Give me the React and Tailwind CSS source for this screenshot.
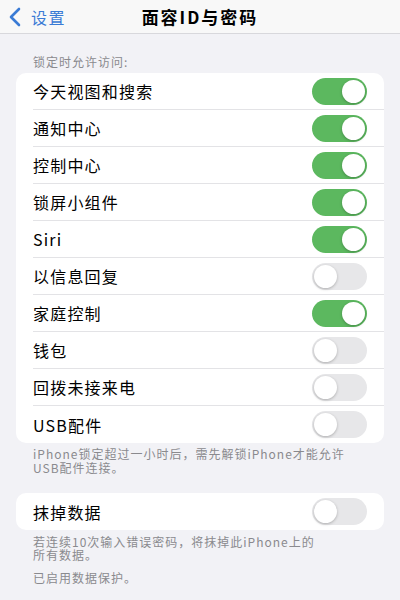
import React from "react";

const rows = [
  { label: "今天视图和搜索", on: true },
  { label: "通知中心", on: true },
  { label: "控制中心", on: true },
  { label: "锁屏小组件", on: true },
  { label: "Siri", on: true },
  { label: "以信息回复", on: false },
  { label: "家庭控制", on: true },
  { label: "钱包", on: false },
  { label: "回拨未接来电", on: false },
  { label: "USB配件", on: false },
];

function Toggle({ on }) {
  return (
    <div
      className={
        "w-[55px] h-[27px] rounded-full p-[2px] flex shrink-0 " +
        (on ? "bg-[#5cb85f] justify-end" : "bg-[#e7e7e9] justify-start")
      }
    >
      <div className="w-[23px] h-[23px] rounded-full bg-white shadow-[0_1px_3px_rgba(0,0,0,0.25)]" />
    </div>
  );
}

function Row({ label, on, last }) {
  return (
    <div className="pl-[17px] flex">
      <div
        className={
          "flex-1 h-[37px] flex items-center justify-between pr-[17px] " +
          (last ? "" : "border-b border-[#e3e3e6]")
        }
      >
        <span className="text-[16px] tracking-[1.2px] text-black leading-[20px]">{label}</span>
        <Toggle on={on} />
      </div>
    </div>
  );
}

export default function App() {
  return (
    <div
      className="w-[400px] h-[600px] bg-[#f2f2f6] overflow-hidden"
      style={{ fontFamily: '"Noto Sans CJK SC", "Noto Sans", sans-serif' }}
    >
      <div className="h-[34px] bg-[#f8f8f8] border-b border-[#d8d8dc] flex items-center relative">
        <div className="flex items-center pl-[8px] text-[#3a7bd5]">
          <svg width="14" height="20" viewBox="0 0 14 20">
            <path d="M11 2 L3 10 L11 18" fill="none" stroke="#3a7bd5" strokeWidth="2.6" strokeLinecap="round" strokeLinejoin="round" />
          </svg>
          <span className="ml-[9px] text-[16px] tracking-[1.5px] leading-[20px]">设置</span>
        </div>
        <div className="absolute inset-x-0 text-center text-[17px] tracking-[2px] font-semibold text-black leading-[20px] pointer-events-none">
          面容ID与密码
        </div>
      </div>

      <div className="px-[16px]">
        <div className="pt-[20px] pb-[4px] pl-[17px] text-[12px] tracking-[1px] leading-[15px] text-[#8a8a8e]">锁定时允许访问:</div>
        <div className="bg-white rounded-[10px] overflow-hidden">
          {rows.map((r, i) => (
            <Row key={r.label} label={r.label} on={r.on} last={i === rows.length - 1} />
          ))}
        </div>
        <div className="pl-[17px] pt-[4px] text-[12px] tracking-[1px] leading-[14px] text-[#8a8a8e]">
          iPhone锁定超过一小时后，需先解锁iPhone才能允许
          <br />
          USB配件连接。
        </div>

        <div className="bg-white rounded-[10px] overflow-hidden mt-[18px]">
          <Row label="抹掉数据" on={false} last />
        </div>
        <div className="pl-[17px] pt-[5px] text-[12px] tracking-[1px] leading-[13px] text-[#8a8a8e]">
          若连续10次输入错误密码，将抹掉此iPhone上的
          <br />
          所有数据。
        </div>
        <div className="pl-[17px] pt-[10px] text-[12px] tracking-[1px] leading-[14px] text-[#8a8a8e]">
          已启用数据保护。
        </div>
      </div>
    </div>
  );
}
